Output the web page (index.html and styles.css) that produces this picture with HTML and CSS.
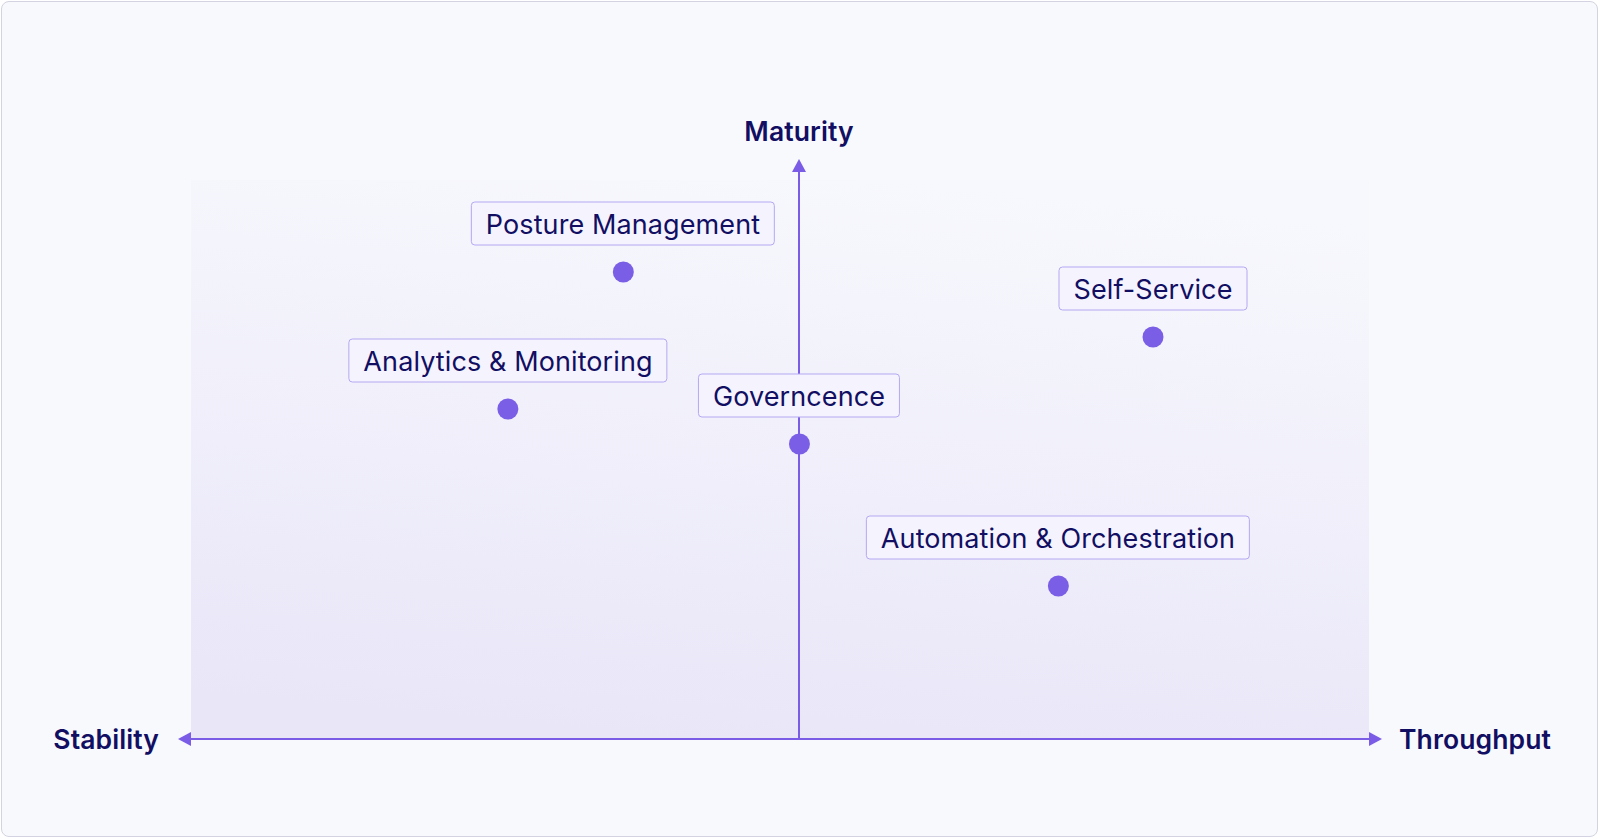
FILE: index.html
```html
<!DOCTYPE html>
<html lang="en">
<head>
<meta charset="utf-8">
<title>Capability Map</title>
<link rel="stylesheet" href="styles.css">
</head>
<body>
<div class="card">
  <div class="axis-label axis-top">Maturity</div>
  <div class="axis-label axis-left">Stability</div>
  <div class="plot">
    <svg class="axes" width="1204" height="587" viewBox="0 0 1204 587" aria-hidden="true">
      <defs>
        <linearGradient id="shade" x1="0.6" y1="0" x2="0.4" y2="1">
          <stop offset="0" stop-color="#f7f8fd"/>
          <stop offset="1" stop-color="#e9e6f8"/>
        </linearGradient>
      </defs>
      <rect x="13" y="21" width="1178" height="559" fill="url(#shade)"/>
      <line x1="12" y1="580" x2="1192" y2="580" stroke="#7a5ce6" stroke-width="2"/>
      <polygon points="0,580 13,573 13,587" fill="#7a5ce6"/>
      <polygon points="1204,580 1191,573 1191,587" fill="#7a5ce6"/>
      <line x1="621" y1="12" x2="621" y2="581" stroke="#7a5ce6" stroke-width="2"/>
      <polygon points="621,0 614,13 628,13" fill="#7a5ce6"/>
    </svg>
    <div class="point" style="left:445px;top:113px"><span class="tag">Posture Management</span><span class="dot"></span></div>
    <div class="point" style="left:330px;top:250px"><span class="tag">Analytics &amp; Monitoring</span><span class="dot"></span></div>
    <div class="point" style="left:621px;top:285px"><span class="tag">Governcence</span><span class="dot"></span></div>
    <div class="point" style="left:975px;top:178px"><span class="tag">Self-Service</span><span class="dot"></span></div>
    <div class="point" style="left:880px;top:427px"><span class="tag">Automation &amp; Orchestration</span><span class="dot"></span></div>
  </div>
  <div class="axis-label axis-right">Throughput</div>
</div>
</body>
</html>
```
FILE: styles.css
```css
* { box-sizing: border-box; }
html, body { margin: 0; padding: 0; background: #ffffff; }
body { font-family: Inter, "Noto Sans", "Liberation Sans", sans-serif; }

.card {
  width: 1597px;
  height: 836px;
  margin: 1px 0 0 1px;
  border: 1px solid #d3d3e1;
  border-radius: 8px;
  background: #f8f9fd;
  display: grid;
  grid-template-columns: 176px 1204px 1fr;
  grid-template-rows: 157px 587px 1fr;
}

.axis-label {
  color: #120f63;
  font-size: 26.5px;
  font-weight: 600;
  line-height: 32px;
  letter-spacing: 0.1px;
  white-space: nowrap;
}
.axis-top {
  grid-column: 2;
  grid-row: 1;
  align-self: end;
  width: 1242px;
  text-align: center;
  margin-bottom: 12px;
}
.axis-left {
  grid-column: 1;
  grid-row: 2;
  align-self: end;
  justify-self: end;
  padding-right: 19px;
  margin-bottom: -9px;
}
.axis-right {
  grid-column: 3;
  grid-row: 2;
  align-self: end;
  justify-self: start;
  padding-left: 17px;
  margin-bottom: -9px;
}

.plot {
  grid-column: 2;
  grid-row: 2;
  position: relative;
}
.axes { display: block; }

.point {
  position: absolute;
  display: flex;
  flex-direction: column;
  align-items: center;
  gap: 16px;
  transform: translate(-50%, calc(-100% + 10.5px));
}
.tag {
  display: block;
  white-space: nowrap;
  color: #120f63;
  font-size: 27px;
  line-height: 40px;
  letter-spacing: 0.1px;
  padding: 2px 14px 0;
  border: 1px solid #b3a8f2;
  border-radius: 4px;
  background: #f5f4fe;
}
.dot {
  display: block;
  width: 21px;
  height: 21px;
  border-radius: 50%;
  background: #7a5fe6;
}
```
